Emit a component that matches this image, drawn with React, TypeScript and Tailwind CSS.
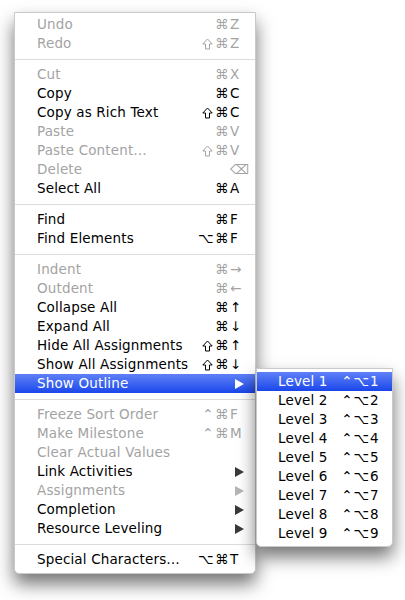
import React from "react";

type Item =
  | { sep: true }
  | {
      label: string;
      mods?: string;
      keyChar?: string;
      disabled?: boolean;
      submenu?: boolean;
      active?: boolean;
    };

const mainItems: Item[] = [
  { label: "Undo", mods: "⌘", keyChar: "Z", disabled: true },
  { label: "Redo", mods: "S⌘", keyChar: "Z", disabled: true },
  { sep: true },
  { label: "Cut", mods: "⌘", keyChar: "X", disabled: true },
  { label: "Copy", mods: "⌘", keyChar: "C" },
  { label: "Copy as Rich Text", mods: "S⌘", keyChar: "C" },
  { label: "Paste", mods: "⌘", keyChar: "V", disabled: true },
  { label: "Paste Content…", mods: "S⌘", keyChar: "V", disabled: true },
  { label: "Delete", mods: "", keyChar: "⌫", disabled: true },
  { label: "Select All", mods: "⌘", keyChar: "A" },
  { sep: true },
  { label: "Find", mods: "⌘", keyChar: "F" },
  { label: "Find Elements", mods: "⌥⌘", keyChar: "F" },
  { sep: true },
  { label: "Indent", mods: "⌘", keyChar: "→", disabled: true },
  { label: "Outdent", mods: "⌘", keyChar: "←", disabled: true },
  { label: "Collapse All", mods: "⌘", keyChar: "↑" },
  { label: "Expand All", mods: "⌘", keyChar: "↓" },
  { label: "Hide All Assignments", mods: "S⌘", keyChar: "↑" },
  { label: "Show All Assignments", mods: "S⌘", keyChar: "↓" },
  { label: "Show Outline", submenu: true, active: true },
  { sep: true },
  { label: "Freeze Sort Order", mods: "⌃⌘", keyChar: "F", disabled: true },
  { label: "Make Milestone", mods: "⌃⌘", keyChar: "M", disabled: true },
  { label: "Clear Actual Values", disabled: true },
  { label: "Link Activities", submenu: true },
  { label: "Assignments", submenu: true, disabled: true },
  { label: "Completion", submenu: true },
  { label: "Resource Leveling", submenu: true },
  { sep: true },
  { label: "Special Characters…", mods: "⌥⌘", keyChar: "T" },
];

const levels = [1, 2, 3, 4, 5, 6, 7, 8, 9];

// outlined shift arrow (⇧)
function ShiftIcon() {
  return (
    <svg width="11" height="12" viewBox="0 0 11 12" className="mr-[2px] self-center">
      <path
        d="M5.5 1 L10.2 6 L7.5 6 L7.5 11 L3.5 11 L3.5 6 L0.8 6 Z"
        fill="none"
        stroke="currentColor"
        strokeWidth="1"
        strokeLinejoin="miter"
      />
    </svg>
  );
}

function Mods({ mods }: { mods: string }) {
  return (
    <span className="flex items-center text-right tracking-[1.5px]">
      {mods.split("").map((m, i) =>
        m === "S" ? <ShiftIcon key={i} /> : <span key={i}>{m}</span>
      )}
    </span>
  );
}

function Row({ item }: { item: Item }) {
  if ("sep" in item) {
    return (
      <div className="h-[12px] flex items-center">
        <div className="h-px w-full bg-[#dcdcdc]" />
      </div>
    );
  }
  const color = item.active
    ? "text-white"
    : item.disabled
      ? "text-[#a3a3a3]"
      : "text-black";
  return (
    <div
      className={`h-[19px] flex items-center pl-[22px] pr-[10px] ${color} ${
        item.active ? "bg-gradient-to-b from-[#5f7ff6] to-[#1a45ea]" : ""
      }`}
    >
      <span className="flex-1 whitespace-nowrap tracking-[0.15px]">{item.label}</span>
      {item.submenu ? (
        <svg width="9" height="10" viewBox="0 0 9 10" className="mr-[1px]">
          <path
            d="M0 0 L9 5 L0 10 Z"
            fill={item.active ? "#ffffff" : item.disabled ? "#b5b5b5" : "#3a3a3a"}
          />
        </svg>
      ) : item.keyChar !== undefined ? (
        <span className="flex items-center whitespace-nowrap">
          <Mods mods={item.mods ?? ""} />
          <span className="w-[15px] text-left">{item.keyChar}</span>
        </span>
      ) : null}
    </div>
  );
}

export default function App() {
  return (
    <div
      className="relative w-[405px] h-[600px] bg-white text-[13.5px] leading-[19px] overflow-hidden"
      style={{ fontFamily: '"DejaVu Sans", "Noto Sans", sans-serif' }}
    >
      <div className="absolute left-[14px] top-[12px] w-[242px] bg-white border border-[#c9c9c9] rounded-b-[5px] pt-[2px] pb-[4px] shadow-[0_10px_18px_rgba(0,0,0,0.55)]">
        {mainItems.map((it, i) => (
          <Row key={i} item={it} />
        ))}
      </div>

      <div className="absolute left-[256px] top-[368px] w-[137px] bg-white border border-[#c9c9c9] rounded-b-[5px] py-[3px] shadow-[0_10px_18px_rgba(0,0,0,0.55)]">
        {levels.map((n) => (
          <div
            key={n}
            className={`h-[19px] flex items-center pl-[21px] pr-[9px] ${
              n === 1
                ? "text-white bg-gradient-to-b from-[#5f7ff6] to-[#1a45ea]"
                : "text-black"
            }`}
          >
            <span className="flex-1 whitespace-nowrap tracking-[0.15px]">Level {n}</span>
            <span className="flex whitespace-nowrap">
              <span className="tracking-[1px]">⌃⌥</span>
              <span className="w-[13px] text-left">{n}</span>
            </span>
          </div>
        ))}
      </div>
    </div>
  );
}
